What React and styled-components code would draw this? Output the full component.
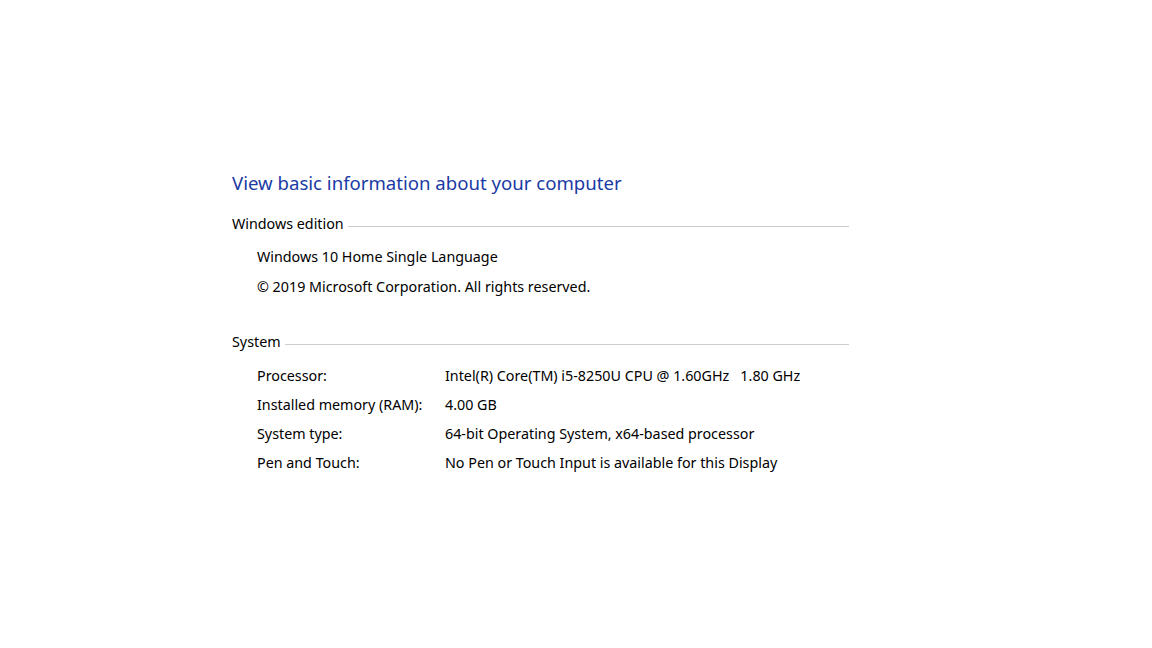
import styled, { createGlobalStyle } from 'styled-components'

const GlobalStyle = createGlobalStyle`
  html, body {
    margin: 0;
    padding: 0;
    background: #ffffff;
  }
  body {
    font-family: "Noto Sans", "Open Sans", sans-serif;
    color: #000000;
  }
`

const Page = styled.div`
  width: 1152px;
  height: 648px;
  box-sizing: border-box;
  padding: 170px 0 0 232px;
`

const Panel = styled.div`
  width: 617px;
  display: flex;
  flex-direction: column;
`

const Title = styled.h1`
  margin: 0;
  font-size: 18.6px;
  font-weight: 400;
  line-height: 26px;
  color: #1a3aa4;
`

const Section = styled.section`
  display: flex;
  flex-direction: column;
  margin-top: ${(props) => props.$top}px;
`

const SectionHead = styled.div`
  display: flex;
  align-items: center;
  gap: 4px;
  font-size: 14.3px;
  line-height: 20px;

  &::after {
    content: '';
    flex: 1;
    height: 1px;
    margin-top: 5px;
    background: #cdcdcd;
  }
`

const Rows = styled.div`
  display: flex;
  flex-direction: column;
  padding: ${(props) => props.$pad}px 0 0 25px;
  gap: ${(props) => props.$gap}px;
`

const Line = styled.div`
  font-size: 14.3px;
  line-height: 20px;
  white-space: pre;
`

const Row = styled.div`
  display: grid;
  grid-template-columns: 188px 1fr;
  font-size: 14.3px;
  line-height: 20px;
  white-space: pre;
`

const specs = [
  ['Processor:', 'Intel(R) Core(TM) i5-8250U CPU @ 1.60GHz   1.80 GHz'],
  ['Installed memory (RAM):', '4.00 GB'],
  ['System type:', '64-bit Operating System, x64-based processor'],
  ['Pen and Touch:', 'No Pen or Touch Input is available for this Display'],
]

function App() {
  return (
    <>
      <GlobalStyle />
      <Page>
        <Panel>
          <Title>View basic information about your computer</Title>
          <Section $top={18}>
            <SectionHead>Windows edition</SectionHead>
            <Rows $pad={13} $gap={10}>
              <Line>Windows 10 Home Single Language</Line>
              <Line>© 2019 Microsoft Corporation. All rights reserved.</Line>
            </Rows>
          </Section>
          <Section $top={35}>
            <SectionHead>System</SectionHead>
            <Rows $pad={14} $gap={9}>
              {specs.map(([label, value]) => (
                <Row key={label}>
                  <span>{label}</span>
                  <span>{value}</span>
                </Row>
              ))}
            </Rows>
          </Section>
        </Panel>
      </Page>
    </>
  )
}

export default App
